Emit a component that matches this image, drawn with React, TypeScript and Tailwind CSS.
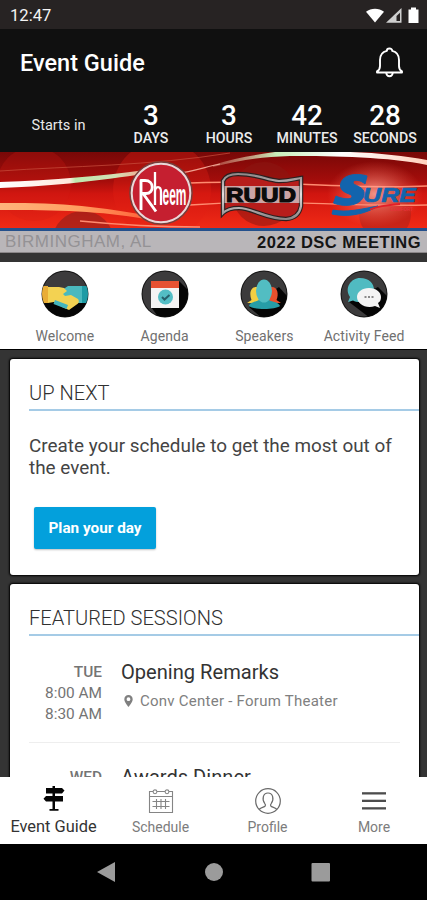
import React from "react";

const countdown = [
  { value: "3", unit: "DAYS" },
  { value: "3", unit: "HOURS" },
  { value: "42", unit: "MINUTES" },
  { value: "28", unit: "SECONDS" },
];

function StatusBar() {
  return (
    <div className="flex h-[29px] shrink-0 items-center justify-between bg-[#272323] pl-[10px] pr-[6px] pt-[2px] text-white">
      <span className="text-[16.6px] leading-[20px] text-[#f4f4f4]">12:47</span>
      <svg width="56" height="20" viewBox="0 0 56 20" fill="none">
        <path d="M1 5.700C6 1.600 14 1.600 19 5.700L10 16.500Z" fill="#fff" />
        <path d="M21 16.700L36.500 2V16.700Z" fill="#cfcfcf" />
        <path d="M31.500 10L35 6.800V15H31.500Z" fill="#272323" />
        <path d="M43.500 3.500H46V1.500h5v2h2.500v13.500h-10z" fill="#fff" />
      </svg>
    </div>
  );
}

function Header() {
  return (
    <header className="h-[123px] shrink-0 bg-[#101010] text-white">
      <div className="flex h-[68px] items-center justify-between pl-[20px] pr-[22px]">
        <h1 className="text-[23.5px] font-medium leading-[28px]">Event Guide</h1>
        <svg width="31" height="32" viewBox="0 0 31 32" fill="none" stroke="#fff" strokeWidth="1.9" strokeLinejoin="round">
          <path d="M15.500 1.500c-1.700 0-2.700 1-2.700 2.400C8.200 5 6 8.500 6 13v6c0 3-1.200 4.500-3 5.400V25.500h25v-1.100c-1.800-.9-3-2.400-3-5.400v-6c0-4.500-2.200-8-6.800-9.100 0-1.400-1-2.400-2.700-2.400z" />
          <path d="M12.300 26c.2 2.200 1.400 3.300 3.200 3.300s3-1.100 3.200-3.300" />
        </svg>
      </div>
      <div className="flex pl-[5px]">
        <div className="w-[107px] pt-[20px] text-center text-[14.500px] leading-[18px] text-[#e9e9e9]">Starts in</div>
        {countdown.map((c) => (
          <div key={c.unit} className="w-[78px] pt-[6px] text-center font-medium">
            <div className="text-[27.800px] leading-[26px]">{c.value}</div>
            <div className="text-[14.2px] leading-[18px] text-[#ececec]">{c.unit}</div>
          </div>
        ))}
      </div>
    </header>
  );
}

function Banner() {
  return (
    <div className="shrink-0">
      <svg className="block" width="427" height="76" viewBox="0 0 427 76">
        <defs>
          <linearGradient id="red" x1="0" y1="0" x2="0" y2="1">
            <stop offset="0" stopColor="#780807" />
            <stop offset=".38" stopColor="#a40d0b" />
            <stop offset=".55" stopColor="#d0150f" />
            <stop offset="1" stopColor="#f02a16" />
          </linearGradient>
          <linearGradient id="beam" x1="0" y1="0" x2="1" y2="0">
            <stop offset="0" stopColor="#fff" />
            <stop offset=".48" stopColor="#ffe9dc" />
            <stop offset=".52" stopColor="#bfe8ae" />
            <stop offset=".8" stopColor="#d3dfb4" />
            <stop offset="1" stopColor="#f6a48d" />
          </linearGradient>
          <linearGradient id="beamTop" x1="0" y1="0" x2="1" y2="0">
            <stop offset="0" stopColor="#f3b6a0" stopOpacity=".3" />
            <stop offset=".3" stopColor="#c8efbb" />
            <stop offset=".6" stopColor="#fff" />
            <stop offset="1" stopColor="#ffd0bd" />
          </linearGradient>
          <linearGradient id="beamLow" x1="0" y1="0" x2="1" y2="0">
            <stop offset="0" stopColor="#ffb27c" />
            <stop offset=".5" stopColor="#ffa061" />
            <stop offset="1" stopColor="#ff5a35" />
          </linearGradient>
          <linearGradient id="steel" x1="0" y1="0" x2="0" y2="1">
            <stop offset="0" stopColor="#8f8888" />
            <stop offset=".45" stopColor="#e3dede" />
            <stop offset="1" stopColor="#8c8686" />
          </linearGradient>
          <radialGradient id="glow">
            <stop offset="0" stopColor="#ffb3a4" stopOpacity=".8" />
            <stop offset="1" stopColor="#ff6a55" stopOpacity="0" />
          </radialGradient>
        </defs>
        <rect width="427" height="76" fill="url(#red)" />
        <circle cx="34" cy="32" r="37" fill="#d51a12" opacity=".25" />
        <circle cx="162" cy="38" r="49" fill="#e32015" opacity=".35" />
        <circle cx="83" cy="90" r="31" fill="#8c201a" opacity=".6" />
        <circle cx="264" cy="42" r="32" fill="#8b1712" opacity=".55" />
        <circle cx="385" cy="62" r="26" fill="#a32019" opacity=".5" />
        <path d="M0 30C55 28 100 24 145 18L145 22C100 28 60 34 0 36Z" fill="url(#beam)" />
        <path d="M0 19C70 14 150 14 230 1" stroke="#c9503f" strokeWidth="1" fill="none" opacity=".7" />
        <path d="M175 22C195 19 205 15 220 12" stroke="#f0a08f" strokeWidth="1.200" fill="none" />
        <path d="M213 13C235 6 255 3 275 0H350C380 1 405 4 427 8V13C390 5 335 4 290 4C260 5 240 8 213 15Z" fill="url(#beamTop)" />
        <path d="M0 51C65 50 110 56 155 65L145 67C100 59 60 58 0 58Z" fill="url(#beamLow)" />
        <path d="M80 69C120 73 160 75 200 75M190 31C270 27 345 38 427 34M190 53C280 46 330 55 427 53" stroke="#ff8b70" strokeWidth="1.300" fill="none" />

        <circle cx="161" cy="41" r="31" fill="#bd1828" stroke="#71413c" strokeWidth="1.500" />
        <circle cx="161" cy="41" r="29.300" fill="#c51f30" stroke="#e8d9d9" strokeWidth="2" />
        <path d="M141 58V28.500h4c9.500 0 9.500 13 1 13h-3l13 18" fill="none" stroke="#fff" strokeWidth="2.900" strokeLinejoin="round" />
        <path d="M155 53V20M155 40c0-6.500 6-6.500 6 0v13" fill="none" stroke="#fff" strokeWidth="2.300" />
        <text x="162.500" y="53" fontSize="30" fontFamily="Liberation Sans" fontWeight="700" fill="#fff" textLength="24" lengthAdjust="spacingAndGlyphs">eem</text>

        <path d="M223 29Q226 22 238 22C258 22 266 28 279 29C290 29 294 27 301 26V54Q299 66 286 67C266 67 252 56 239 56C232 56 226 58 223 61Z" fill="#b71d1b" stroke="#2c2020" strokeWidth="4.500" />
        <path d="M223 29Q226 22 238 22C258 22 266 28 279 29C290 29 294 27 301 26V54Q299 66 286 67C266 67 252 56 239 56C232 56 226 58 223 61Z" fill="none" stroke="url(#steel)" strokeWidth="2.200" />
        <rect x="224.500" y="34" width="75" height="17" fill="#d0c8c8" opacity=".8" />
        <text x="226" y="50" fontSize="21" fontFamily="Liberation Sans" fontWeight="700" fill="#0b0b0b" stroke="#0b0b0b" strokeWidth="1.200" textLength="70" lengthAdjust="spacingAndGlyphs">RUUD</text>

        <ellipse cx="375" cy="42" rx="48" ry="33" fill="url(#glow)" />
        <g fill="#1264ad" stroke="#1264ad" strokeLinejoin="round">
          <path d="M365 32L367 24C354 20 341 24 340.500 33C340 42 353 41 352 45C351 48 342 47 336 44L333.500 51C346 56 362 53 364 43C366 34 352 34 353 30C354 27 361 28 365 32Z" strokeWidth="1" />
          <text x="363" y="50" fontSize="21" fontFamily="Liberation Sans" fontWeight="700" fontStyle="italic" strokeWidth=".7" textLength="53" lengthAdjust="spacingAndGlyphs">URE</text>
          <path d="M333 58C346 61 362 57 378 54C367 61 350 66 332 62Z" strokeWidth="1" />
        </g>
        <path d="M370 57.500C378 54 386 53 400 52" stroke="#e32028" strokeWidth="1.800" fill="none" />
        <text x="390" y="58.500" fontSize="4.500" fontFamily="Liberation Sans" fontWeight="700" fill="#e4333a" textLength="23" lengthAdjust="spacingAndGlyphs">COMFORT</text>
      </svg>
      <div className="h-[3px] bg-[#24508c]" />
      <div className="flex h-[22px] items-center justify-between border-b border-[#8b8789] bg-[#b9b6b9] pl-[5px] pr-[6px] font-['Liberation_Sans',sans-serif] leading-[20px]">
        <span className="text-[17px] tracking-[0.5px] text-[#949295]">BIRMINGHAM, AL</span>
        <span className="text-[16.500px] font-bold tracking-[0.5px] text-[#151515]">2022 DSC MEETING</span>
      </div>
    </div>
  );
}

function IconDisc({ id, children }: { id: string; children: React.ReactNode }) {
  return (
    <svg width="48" height="48" viewBox="0 0 48 48">
      <defs>
        <clipPath id={id}>
          <circle cx="24" cy="24" r="23" />
        </clipPath>
      </defs>
      <circle cx="24" cy="24" r="23.500" fill="#161616" />
      <g clipPath={`url(#${id})`}>
        <circle cx="24" cy="24" r="22.500" fill="#3c3b3c" />
        {children}
      </g>
    </svg>
  );
}

function QuickLinks() {
  const items = [
    {
      label: "Welcome",
      icon: (
        <IconDisc id="welcome">
          <path d="M0 32H48V48H0Z" fill="#050505" />
          <path d="M0 16h7v17H0z" fill="#e9ad36" />
          <path d="M41 16h7v17h-7z" fill="#1e9ba5" />
          <path d="M21 20l6-4h14v17H30L20 24z" fill="#4ab9be" />
          <path d="M7 17h11l5 1 3 3-4 3 2 2 6-1 7 4c2 3 0 5-2 6l-7 5-7-3-8-5-6 1z" fill="#f3d252" />
          <path d="M14 30l13 5-1.500 4-13-5z" fill="#45b5bd" />
        </IconDisc>
      ),
    },
    {
      label: "Agenda",
      icon: (
        <IconDisc id="agenda">
          <path d="M38 11L48 21V48H18L10 37Z" fill="#050505" />
          <path d="M10 11h28v27H10z" fill="#f3f3f3" />
          <path d="M10 11h28v7H10z" fill="#e65232" />
          <circle cx="24.500" cy="27" r="7.500" fill="#53bdc5" />
          <path d="M21 27l2.500 2.500L28.500 25" fill="none" stroke="#27606c" strokeWidth="2" />
        </IconDisc>
      ),
    },
    {
      label: "Speakers",
      icon: (
        <IconDisc id="speakers">
          <path d="M39 17L48 27V48H22L9 37Z" fill="#050505" />
          <path d="M7 33l4.500-3c-2.500-6-1-13 4.500-13h4v16z" fill="#f4cf42" />
          <path d="M41 33l-4.500-3c2.500-6 1-13-4.500-13h-4v16z" fill="#e7512d" />
          <path d="M9 36c1-4 7-4 10-6h10c3 2 10 2 11 6-5 4-26 4-31 0z" fill="#269da7" />
          <ellipse cx="24" cy="21" rx="8" ry="11.500" fill="#52bdc2" />
        </IconDisc>
      ),
    },
    {
      label: "Activity Feed",
      icon: (
        <IconDisc id="activity">
          <path d="M38 17L48 27V48H30L9 32Z" fill="#050505" />
          <path d="M20 8c9 0 14 5 14 12s-6 12-14 12c-3 0-5-.5-7-1.500L8 32l2-5c-6-9 1-19 10-19z" fill="#50bbc1" />
          <path d="M29 18c7 0 12 4 12 9 0 3-1 5-3 6l2 5-5-2c-9 3-18-2-18-9 0-5 5-9 12-9z" fill="#f4f4f4" />
          <path d="M24.500 27h2m1.500 0h2m1.500 0h2" stroke="#8a8a8a" strokeWidth="2" />
        </IconDisc>
      ),
    },
  ];
  return (
    <nav className="mt-[9px] flex h-[87px] shrink-0 bg-white pl-[15px] pr-[13px] pt-[8px]">
      {items.map((i) => (
        <div key={i.label} className="flex flex-1 flex-col items-center">
          {i.icon}
          <span className="mt-[9px] whitespace-nowrap text-[14px] leading-[18px] tracking-[0.1px] text-[#707070]">{i.label}</span>
        </div>
      ))}
    </nav>
  );
}

function SectionTitle({ children }: { children: React.ReactNode }) {
  return (
    <h2 className="ml-[19px] h-[52px] border-b-2 border-[#a5cbe6] pt-[21px] text-[20.1px] font-light leading-[26px] text-[#303030]">
      {children}
    </h2>
  );
}

function Session({ day, times, title, place }: { day: string; times?: string[]; title: string; place?: string }) {
  return (
    <div className="ml-[19px] mr-[19px] flex h-[105px] shrink-0 border-b border-[#eeeeee]">
      <div className="w-[73px] pt-[24px] text-right text-[15.4px] leading-[21px] text-[#747474]">
        <div className="font-medium">{day}</div>
        {times?.map((t) => (
          <div key={t}>{t}</div>
        ))}
      </div>
      <div className="pl-[19px] pt-[21px]">
        <div className="text-[20.1px] leading-[26px] text-[#333]">{title}</div>
        {place && (
          <div className="mt-[6px] flex items-center">
            <svg className="ml-[3px]" width="9" height="12" viewBox="0 0 9 12">
              <path fillRule="evenodd" d="M4.500 0C2 0 .3 1.800.3 4.200.3 7.200 4.500 12 4.500 12s4.200-4.800 4.200-7.800C8.700 1.800 7 0 4.500 0zm0 2.300a1.900 1.900 0 110 3.800 1.900 1.900 0 010-3.800z" fill="#808080" />
            </svg>
            <span className="ml-[7px] text-[15px] leading-[20px] tracking-[0.25px] text-[#808080]">{place}</span>
          </div>
        )}
      </div>
    </div>
  );
}

function TabBar() {
  const label = "text-[14px] leading-[18px] text-[#7c7c7c]";
  return (
    <nav className="flex h-[67px] shrink-0 bg-white">
      <div className="flex w-[107px] flex-col items-center pt-[9px]">
        <svg width="22" height="26" viewBox="0 0 22 26" fill="#050505">
          <path d="M9.500 0h2.500v2H19l2.500 2.600L19 7.500h-7V10h8v5.500h-8V23h3.500v1.700h-9V23h3v-7.500H3L.5 12.700 3 10h6.500V7.500H3V2h6.500z" />
        </svg>
        <span className="mt-[5px] text-[16.4px] leading-[20px] text-[#333]">Event Guide</span>
      </div>
      <div className="flex w-[107px] flex-col items-center pt-[12px]">
        <svg width="26" height="25" viewBox="0 0 26 25" fill="none" stroke="#858585" strokeWidth="1.100">
          <path d="M5 2.500H1.500v21h23v-21H21M9 2.500h8M1.500 7.500h23" />
          <circle cx="7" cy="2.800" r="1.900" />
          <circle cx="19" cy="2.800" r="1.900" />
          <path d="M4.500 12.500h17M4.500 17.500h17M8.500 10v10M13 10v10M17.500 10v10" />
        </svg>
        <span className={`mt-[4px] ${label}`}>Schedule</span>
      </div>
      <div className="flex w-[107px] flex-col items-center pt-[10px]">
        <svg width="28" height="28" viewBox="0 0 28 28" fill="none" stroke="#696969" strokeWidth="1.200">
          <circle cx="14" cy="14" r="12.300" />
          <path d="M5 22.500c2-2.200 5-2.300 6-3.200.8-.8.5-2-.3-3-3-4-1.700-10.300 3.300-10.300s6.300 6.300 3.300 10.300c-.8 1-1.100 2.200-.3 3 1 .9 4 1 6 3.200" />
        </svg>
        <span className={`mt-[3px] ${label}`}>Profile</span>
      </div>
      <div className="flex w-[106px] flex-col items-center pt-[15px]">
        <svg width="24" height="18" viewBox="0 0 24 18" fill="#4c4c4c">
          <rect y="0.200" width="24" height="2.300" />
          <rect y="7.700" width="24" height="2.300" />
          <rect y="15.200" width="24" height="2.300" />
        </svg>
        <span className={`mt-[8px] ${label}`}>More</span>
      </div>
    </nav>
  );
}

function SystemNav() {
  return (
    <div className="h-[56px] shrink-0 bg-black">
      <svg width="427" height="56" viewBox="0 0 427 56" fill="#9b9b9b">
        <path d="M97 28L115 18V38Z" />
        <circle cx="214" cy="28" r="9" />
        <rect x="311.500" y="19" width="18.500" height="18.500" rx="1" />
      </svg>
    </div>
  );
}

export default function App() {
  return (
    <div className="flex h-[900px] w-[427px] flex-col overflow-hidden bg-[#343434] font-['Roboto',sans-serif]">
      <StatusBar />
      <Header />
      <Banner />
      <QuickLinks />
      <main className="flex min-h-0 flex-1 flex-col gap-[9px] overflow-hidden border-t border-black px-[10px] pt-[9px]">
        <section className="h-[216px] w-[409px] shrink-0 rounded-[3px] bg-white shadow-[0_0_2px_1px_#000]">
          <SectionTitle>UP NEXT</SectionTitle>
          <p className="ml-[19px] mt-[24px] w-[380px] text-[18.9px] leading-[22px] text-[#444]">
            Create your schedule to get the most out of the event.
          </p>
          <button className="ml-[24px] mt-[28px] flex h-[42px] w-[122px] items-center justify-center rounded-[2px] bg-[#03a0dc] text-[15.3px] font-bold leading-[20px] text-white shadow-[0_1px_2px_rgba(0,0,0,0.25)]">
            Plan your day
          </button>
        </section>
        <section className="h-[400px] w-[409px] shrink-0 rounded-[3px] bg-white shadow-[0_0_2px_1px_#000]">
          <SectionTitle>FEATURED SESSIONS</SectionTitle>
          <div className="h-[2px]" />
          <Session day="TUE" times={["8:00 AM", "8:30 AM"]} title="Opening Remarks" place="Conv Center - Forum Theater" />
          <Session day="WED" title="Awards Dinner" />
        </section>
      </main>
      <TabBar />
      <SystemNav />
    </div>
  );
}
